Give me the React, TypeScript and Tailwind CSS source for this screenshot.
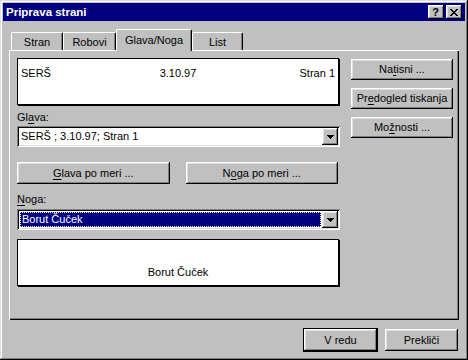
import React from 'react';

const FONT = "font-['Liberation_Sans',Arial,sans-serif]";

// Win95 style bevels
const RAISED =
  'bg-[#c0c0c0] shadow-[inset_-1px_-1px_#000,inset_1px_1px_#fff,inset_-2px_-2px_#808080,inset_2px_2px_#dfdfdf]';
const SUNKEN =
  'shadow-[inset_1px_1px_#808080,inset_-1px_-1px_#fff,inset_2px_2px_#000,inset_-2px_-2px_#dfdfdf]';

const Key = ({ children }: { children: React.ReactNode }) => (
  <span className="underline underline-offset-[2px] decoration-1">{children}</span>
);

const Button: React.FC<{ className?: string; children: React.ReactNode }> = ({ className, children }) => (
  <div className={`${RAISED} flex items-center justify-center text-[11px] leading-[13px] text-black ${className ?? ''}`}>
    {children}
  </div>
);

const Arrow = () => (
  <svg width="7" height="4" viewBox="0 0 7 4" shapeRendering="crispEdges">
    <path d="M0 0h7v1H0zM1 1h5v1H1zM2 2h3v1H2zM3 3h1v1H3z" fill="#000" />
  </svg>
);

const DropButton = () => (
  <div className={`${RAISED} w-[16px] h-full flex items-center justify-center`}>
    <Arrow />
  </div>
);

const tabs = [
  { label: 'Stran', w: 'w-[52px]', active: false },
  { label: 'Robovi', w: 'w-[53px]', active: false },
  { label: 'Glava/Noga', w: 'w-[76px]', active: true },
  { label: 'List', w: 'w-[51px]', active: false },
];

export default function App() {
  return (
    <div
      className={`${FONT} w-[468px] h-[360px] bg-[#c0c0c0] p-[3px] flex flex-col shadow-[inset_-1px_-1px_#000,inset_1px_1px_#dfdfdf,inset_-2px_-2px_#808080,inset_2px_2px_#fff]`}
    >
      {/* title bar */}
      <div className="h-[18px] bg-[#000080] flex items-center justify-between pl-[3px] pr-[3px]">
        <span className="text-white font-bold text-[11.5px] leading-[14px]">Priprava strani</span>
        <div className="flex gap-[2px]">
          <div className={`${RAISED} w-[16px] h-[14px] flex items-center justify-center`}>
            <span className="font-bold text-[11px] leading-[11px] text-black pr-[1px]">?</span>
          </div>
          <div className={`${RAISED} w-[16px] h-[14px] flex items-center justify-center`}>
            <svg width="8" height="7" viewBox="0 0 8 7" shapeRendering="crispEdges">
              <path
                d="M0 0h2v1H0zM6 0h2v1H6zM1 1h2v1H1zM5 1h2v1H5zM2 2h4v1H2zM3 3h2v1H3zM2 4h4v1H2zM1 5h2v1H1zM5 5h2v1H5zM0 6h2v1H0zM6 6h2v1H6z"
                fill="#000"
              />
            </svg>
          </div>
        </div>
      </div>

      {/* tabs */}
      <div className="pt-[8px] pl-[6px]">
        <div className="h-[21px] flex items-end pl-[2px]">
          {tabs.map((t) =>
            t.active ? (
              <div
                key={t.label}
                className={`${t.w} h-[22px] -mb-[1px] relative z-10 bg-[#c0c0c0] border-l border-t border-white border-r border-r-black rounded-t-[2px] shadow-[inset_-1px_0_#808080] flex justify-center pt-[4px] text-[11px] leading-[13px] text-black`}
              >
                {t.label}
              </div>
            ) : (
              <div
                key={t.label}
                className={`${t.w} h-[18px] bg-[#c0c0c0] border-l border-t border-white border-r border-r-black rounded-t-[2px] shadow-[inset_-1px_0_#808080] flex justify-center pt-[3px] text-[11px] leading-[13px] text-black`}
              >
                {t.label}
              </div>
            )
          )}
        </div>

        {/* panel */}
        <div className="w-[450px] h-[270px] flex pl-[8px] pt-[8px] shadow-[inset_1px_1px_#fff,inset_-1px_-1px_#000,inset_-2px_-2px_#808080]">
          <div className="w-[323px] flex flex-col text-[11px] leading-[13px] text-black">
            <div className="w-[322px] h-[47px] bg-white border border-black shadow-[1px_1px_0_#000] grid grid-cols-[1fr_auto_1fr] px-[3px] pt-[8px] items-start">
              <span>SERŠ</span>
              <span>3.10.97</span>
              <span className="text-right">Stran 1</span>
            </div>

            <div className="mt-[6px]">
              Gl<Key>a</Key>va:
            </div>
            <div className={`${SUNKEN} mt-[2px] h-[21px] p-[2px] flex bg-white`}>
              <div className="flex-1 flex items-center pl-[2px]">SERŠ ; 3.10.97; Stran 1</div>
              <DropButton />
            </div>

            <div className="mt-[15px] flex gap-[16px] w-[321px]">
              <Button className="flex-1 h-[22px]">
                <span>
                  <Key>G</Key>lava po meri ...
                </span>
              </Button>
              <Button className="flex-1 h-[22px]">
                <span>
                  N<Key>o</Key>ga po meri ...
                </span>
              </Button>
            </div>

            <div className="mt-[9px]">
              <Key>N</Key>oga:
            </div>
            <div className={`${SUNKEN} mt-[3px] h-[21px] p-[2px] flex bg-white`}>
              <div className="flex-1 p-[1px] pr-[1px]">
                <div className="h-full bg-[#000080] border border-dotted border-[#f0f0b0] flex items-center pl-[1px] text-white">
                  Borut Čuček
                </div>
              </div>
              <DropButton />
            </div>

            <div className="mt-[9px] w-[322px] h-[47px] bg-white border border-black shadow-[1px_1px_0_#000] flex items-end justify-center pb-[6px]">
              Borut Čuček
            </div>
          </div>

          <div className="ml-[11px] mt-[1px] w-[102px] flex flex-col gap-[8px]">
            <Button className="h-[21px]">
              <span>
                Na<Key>t</Key>isni ...
              </span>
            </Button>
            <Button className="h-[21px]">
              <span>
                Pr<Key>e</Key>dogled tiskanja
              </span>
            </Button>
            <Button className="h-[21px]">
              <span>
                Mo<Key>ž</Key>nosti ...
              </span>
            </Button>
          </div>
        </div>
      </div>

      {/* footer buttons */}
      <div className="mt-[9px] flex justify-end gap-[8px] pr-[7px]">
        <Button className="w-[73px] h-[22px] outline outline-1 outline-black">V redu</Button>
        <Button className="w-[73px] h-[22px]">Prekliči</Button>
      </div>
    </div>
  );
}
